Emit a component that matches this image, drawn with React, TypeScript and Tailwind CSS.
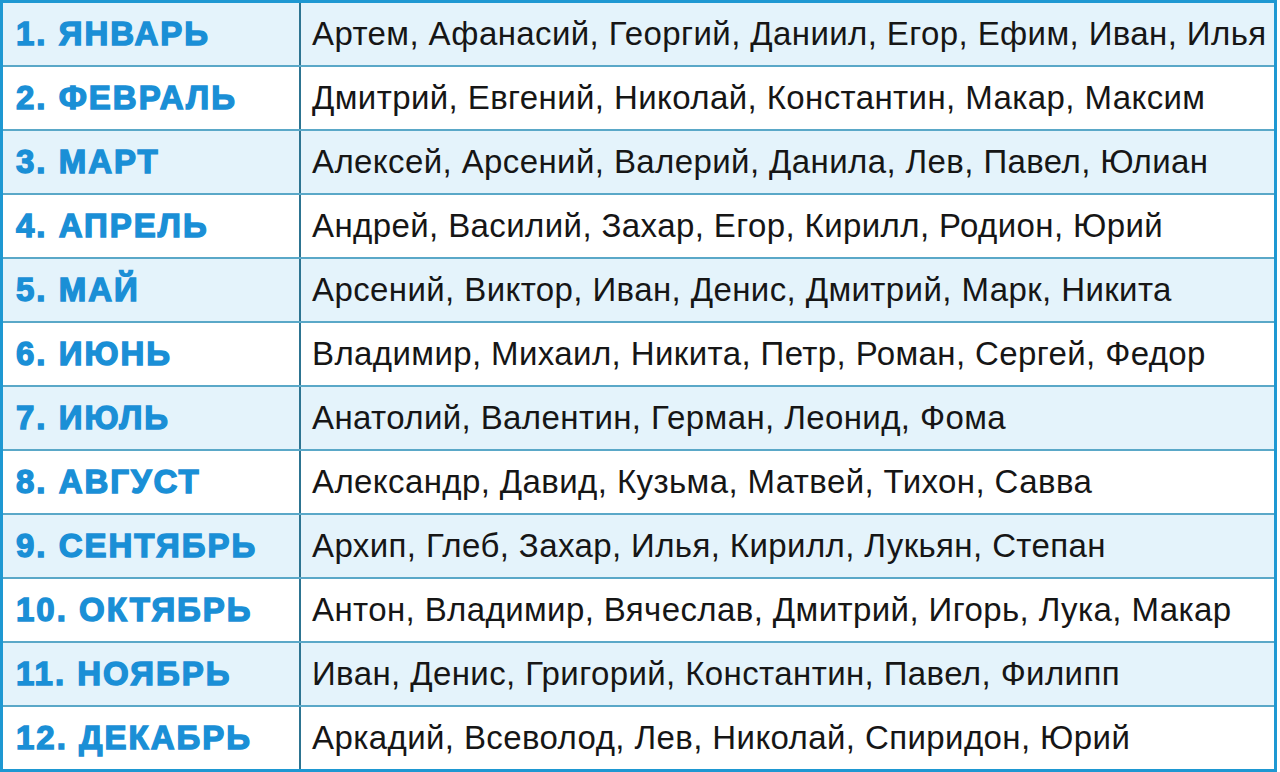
import React from 'react';

const MONTHS = [
  { month: '1. ЯНВАРЬ', names: 'Артем, Афанасий, Георгий, Даниил, Егор, Ефим, Иван, Илья' },
  { month: '2. ФЕВРАЛЬ', names: 'Дмитрий, Евгений, Николай, Константин, Макар, Максим' },
  { month: '3. МАРТ', names: 'Алексей, Арсений, Валерий, Данила, Лев, Павел, Юлиан' },
  { month: '4. АПРЕЛЬ', names: 'Андрей, Василий, Захар, Егор, Кирилл, Родион, Юрий' },
  { month: '5. МАЙ', names: 'Арсений, Виктор, Иван, Денис, Дмитрий, Марк, Никита' },
  { month: '6. ИЮНЬ', names: 'Владимир, Михаил, Никита, Петр, Роман, Сергей, Федор' },
  { month: '7. ИЮЛЬ', names: 'Анатолий, Валентин, Герман, Леонид, Фома' },
  { month: '8. АВГУСТ', names: 'Александр, Давид, Кузьма, Матвей, Тихон, Савва' },
  { month: '9. СЕНТЯБРЬ', names: 'Архип, Глеб, Захар, Илья, Кирилл, Лукьян, Степан' },
  { month: '10. ОКТЯБРЬ', names: 'Антон, Владимир, Вячеслав, Дмитрий, Игорь, Лука, Макар' },
  { month: '11. НОЯБРЬ', names: 'Иван, Денис, Григорий, Константин, Павел, Филипп' },
  { month: '12. ДЕКАБРЬ', names: 'Аркадий, Всеволод, Лев, Николай, Спиридон, Юрий' },
];

export default function App() {
  return (
    <div className="w-[1280px] h-[772px] bg-white pr-[3px]">
      <div className="border-[3px] border-[#1e98d2] h-full flex flex-col">
        {MONTHS.map((row, i) => (
          <div
            key={row.month}
            className={`flex flex-1 ${i % 2 === 0 ? 'bg-[#e4f3fb]' : 'bg-white'} ${i > 0 ? 'border-t-2 border-[#5aa8c8]' : ''}`}
          >
            <div className="w-[298px] shrink-0 border-r-2 border-[#2d7491] flex items-center pl-[13px] font-['Liberation_Sans',Arial,sans-serif] font-bold text-[33px] tracking-[2px] text-[#1a8fd6] [-webkit-text-stroke:1.4px_#1a8fd6] whitespace-nowrap">
              {row.month}
            </div>
            <div className="flex-1 flex items-center pl-[11px] font-['Liberation_Sans',Arial,sans-serif] text-[33px] tracking-[0.4px] text-[#161616] whitespace-nowrap">
              {row.names}
            </div>
          </div>
        ))}
      </div>
    </div>
  );
}
